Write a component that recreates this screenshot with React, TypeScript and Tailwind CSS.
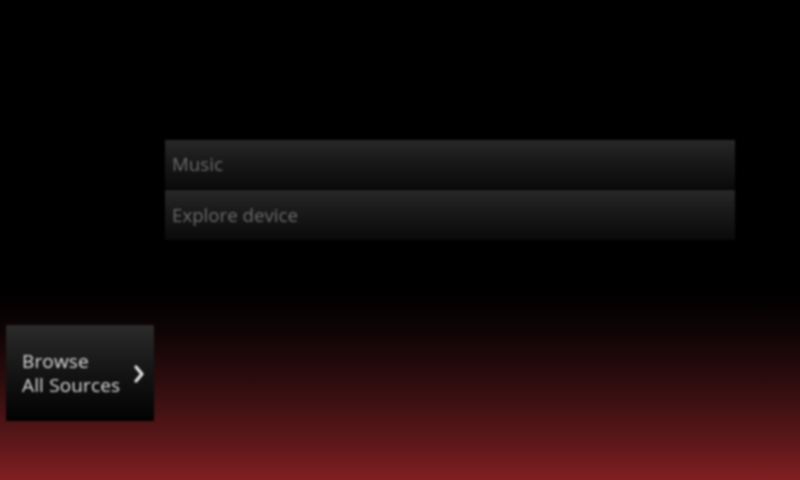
import React from "react";

export default function App() {
  return (
    <div
      className="w-[800px] h-[480px] overflow-hidden flex flex-col bg-[linear-gradient(to_bottom,#000_0px,#000_290px,#0e0405_330px,#2c0c0d_380px,#5a1719_440px,#801f22_480px)]"
      style={{ fontFamily: '"Open Sans", "Liberation Sans", sans-serif' }}
    >
      <div className="mt-[140px] ml-[165px] w-[570px] flex flex-col gap-[1px] bg-black blur-[0.8px]">
        <div className="h-[49px] flex items-center pl-[7px] bg-[linear-gradient(to_bottom,#282828,#1a1a1a_40%,#0a0a0a)] text-[#6b6b6b] text-[18.7px] font-medium">
          Music
        </div>
        <div className="h-[50px] flex items-center pl-[7px] bg-[linear-gradient(to_bottom,#282828,#1a1a1a_40%,#0a0a0a)] text-[#6b6b6b] text-[18.7px] font-medium">
          Explore device
        </div>
      </div>
      <div className="mt-[85px] ml-[6px] w-[148px] h-[96px] flex items-center justify-between pl-[16px] pr-[8px] bg-[linear-gradient(to_bottom,#2b2b2b,#141414_50%,#020202)] blur-[0.8px]">
        <div className="flex flex-col gap-[1px] text-[#dcdcdc] text-[19px] leading-[23px] font-medium tracking-[0.15px]">
          <span>Browse</span>
          <span>All Sources</span>
        </div>
        <svg width="12" height="20" viewBox="0 0 12 20" className="mr-[1px] mt-[2px]">
          <path d="M3 3 L9 10 L3 17" fill="none" stroke="#e6e6e6" strokeWidth="3.2" strokeLinecap="round" strokeLinejoin="round" />
        </svg>
      </div>
    </div>
  );
}
